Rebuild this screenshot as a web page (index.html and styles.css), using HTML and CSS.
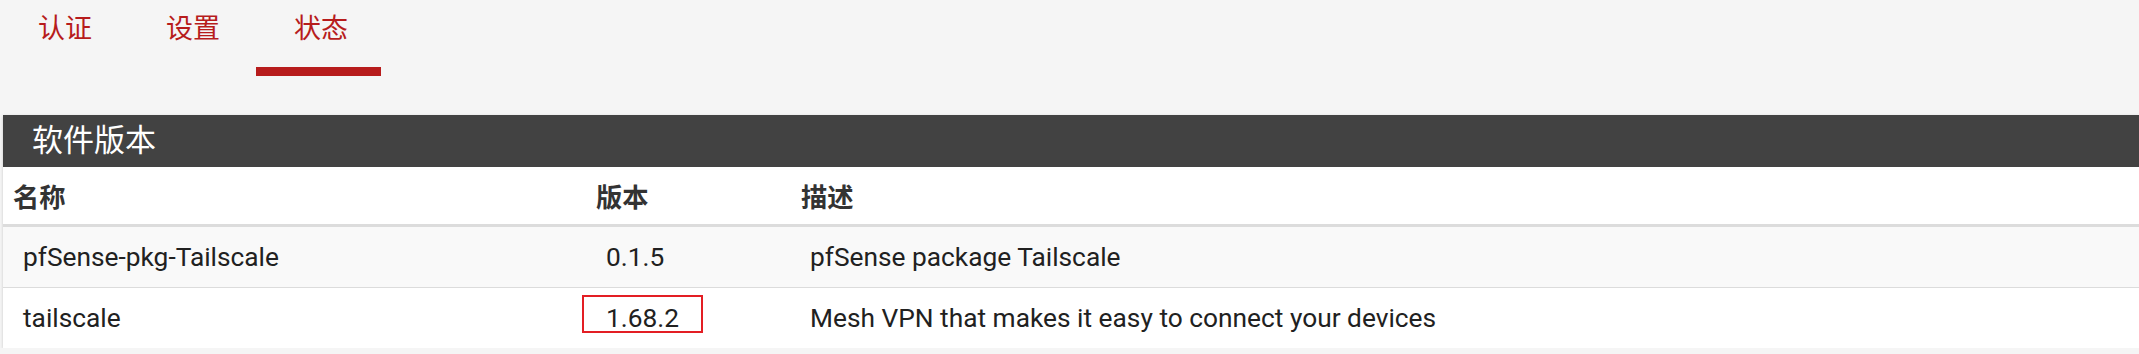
FILE: index.html
```html
<!DOCTYPE html>
<html lang="zh-CN">
<head>
<meta charset="utf-8">
<title>软件版本</title>
<link rel="stylesheet" href="styles.css">
</head>
<body>
<nav class="tabs">
  <a class="tab">认证</a>
  <a class="tab">设置</a>
  <a class="tab active">状态</a>
</nav>
<section class="panel">
  <h2 class="panel-title">软件版本</h2>
  <table class="grid">
    <thead>
      <tr>
        <th class="c-name">名称</th>
        <th class="c-ver">版本</th>
        <th class="c-desc">描述</th>
      </tr>
    </thead>
    <tbody>
      <tr class="odd">
        <td>pfSense-pkg-Tailscale</td>
        <td>0.1.5</td>
        <td>pfSense package Tailscale</td>
      </tr>
      <tr>
        <td>tailscale</td>
        <td class="marked">1.68.2</td>
        <td>Mesh VPN that makes it easy to connect your devices</td>
      </tr>
    </tbody>
  </table>
</section>
</body>
</html>
```
FILE: styles.css
```css
html, body {
  margin: 0;
  padding: 0;
  background: #f5f5f5;
  font-family: Roboto, "Noto Sans CJK SC", sans-serif;
  color: #212121;
}

.tabs {
  display: flex;
  height: 76px;
}

.tab {
  display: block;
  box-sizing: border-box;
  width: 128px;
  padding: 13px 0 0 38px;
  font-size: 27px;
  line-height: 32px;
  color: #b71c1c;
  text-decoration: none;
}

.tab.active {
  border-bottom: 9px solid #b71c1c;
  width: 125px;
}

.panel {
  margin: 39px 0 0 3px;
  background: #fff;
  box-shadow: 0 1px 3px rgba(0, 0, 0, 0.18);
}

.panel-title {
  margin: 0;
  height: 52px;
  padding-left: 29px;
  background: #424242;
  color: #fff;
  font-size: 31px;
  font-weight: normal;
  line-height: 52px;
}

.grid {
  width: 100%;
  border-collapse: collapse;
  font-size: 26.3px;
}

.grid th {
  height: 57px;
  padding: 0 0 0 10px;
  text-align: left;
  font-weight: bold;
  color: #333;
  border-bottom: 3px solid #dcdcdc;
  vertical-align: middle;
}

.grid .c-name { width: 573px; }
.grid .c-ver { width: 194px; }
.grid .c-desc { padding-left: 11px; }

.grid td {
  height: 60px;
  padding: 0 0 0 20px;
  vertical-align: middle;
  color: #212121;
}

.grid tr.odd td {
  background: #f9f9f9;
  border-bottom: 1px solid #dcdcdc;
}

.grid td.marked {
  position: relative;
}

.grid td.marked::after {
  content: "";
  position: absolute;
  left: -4px;
  top: 7px;
  width: 121px;
  height: 38px;
  box-sizing: border-box;
  border: 2px solid #e31e24;
}
```
